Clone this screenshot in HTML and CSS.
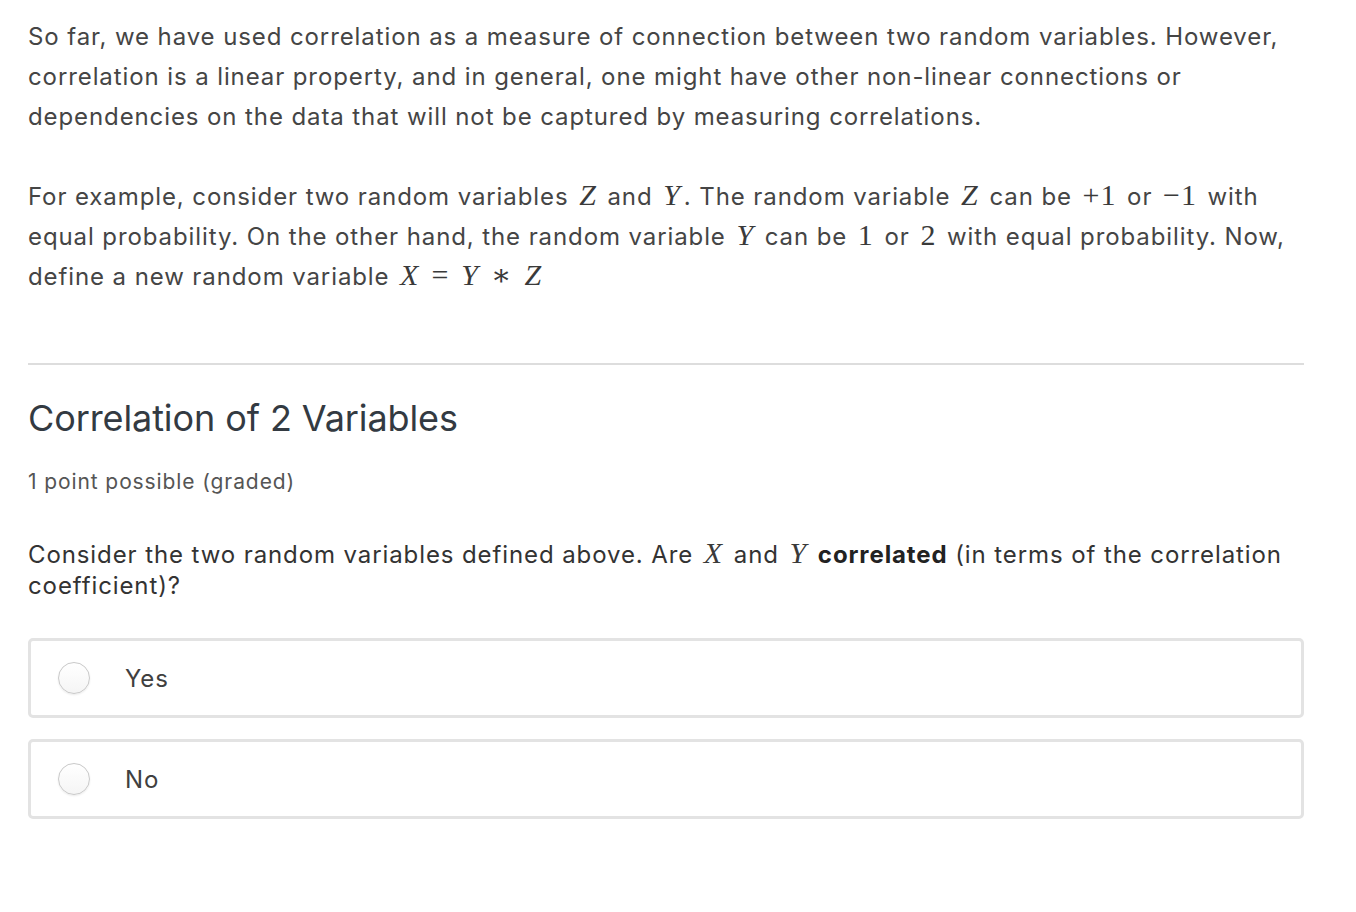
FILE: index.html
```html
<!DOCTYPE html>
<html>
<head>
<meta charset="utf-8">
<link rel="stylesheet" href="styles.css">
</head>
<body>
<div class="page">
  <p class="para">So far, we have used correlation as a measure of connection between two random variables. However, correlation is a linear property, and in general, one might have other non-linear connections or dependencies on the data that will not be captured by measuring correlations.</p>
  <p class="para">For example, consider two random variables <span class="m i">Z</span> and <span class="m i">Y</span>. The random variable <span class="m i">Z</span> can be <span class="m">+1</span> or <span class="m">&minus;1</span> with equal probability. On the other hand, the random variable <span class="m i">Y</span> can be <span class="m">1</span> or <span class="m">2</span> with equal probability. Now, define a new random variable <span class="m"><span class="i">X</span><span class="op">=</span><span class="i">Y</span><span class="op">&lowast;</span><span class="i">Z</span></span></p>
  <hr class="divider">
  <h2 class="title">Correlation of 2 Variables</h2>
  <div class="meta">1 point possible (graded)</div>
  <p class="question">Consider the two random variables defined above. Are <span class="m i">X</span> and <span class="m i">Y</span> <strong>correlated</strong> (in terms of the correlation coefficient)?</p>
  <div class="options">
    <label class="option"><span class="radio"></span><span class="opt-text">Yes</span></label>
    <label class="option"><span class="radio"></span><span class="opt-text">No</span></label>
  </div>
</div>
</body>
</html>
```

FILE: styles.css
```css
html, body {
  margin: 0;
  padding: 0;
  background: #ffffff;
}
body {
  font-family: Inter, "Noto Sans", sans-serif;
  color: #454545;
  letter-spacing: 0.9px;
}
.page {
  padding: 17px 52px 40px 28px;
}
.para {
  margin: 0 0 40px 0;
  font-size: 24px;
  line-height: 40px;
}
.m {
  font-family: "Liberation Serif", "DejaVu Serif", serif;
  font-size: 30px;
  line-height: 1;
  letter-spacing: 1px;
  margin: 0 3px;
  color: #3a3a3a;
}
.i {
  font-style: italic;
}
.op {
  padding: 0 12px;
}
.divider {
  border: 0;
  height: 2px;
  background: #dddddd;
  margin: 66px 0 0 0;
}
.title {
  margin: 31px 0 0 0;
  font-size: 36px;
  font-weight: 400;
  line-height: 44px;
  letter-spacing: -0.1px;
  color: #333a42;
}
.meta {
  margin-top: 29px;
  font-size: 21px;
  line-height: 26px;
  color: #555555;
}
.question {
  margin: 43px 0 0 0;
  font-size: 24px;
  line-height: 31px;
  color: #333333;
}
.question strong {
  font-weight: 700;
  color: #222222;
}
.options {
  margin-top: 37px;
  display: flex;
  flex-direction: column;
  gap: 21px;
}
.option {
  display: flex;
  align-items: center;
  height: 74px;
  border: 3px solid #e3e3e3;
  border-radius: 5px;
  padding-left: 27px;
}
.radio {
  width: 30px;
  height: 30px;
  border-radius: 50%;
  border: 1px solid #c9c9c9;
  background: linear-gradient(#ffffff, #f5f5f5);
  box-shadow: 0 1px 2px rgba(0,0,0,0.08);
  flex: none;
}
.opt-text {
  margin-left: 35px;
  font-size: 24px;
  color: #404040;
}
```
